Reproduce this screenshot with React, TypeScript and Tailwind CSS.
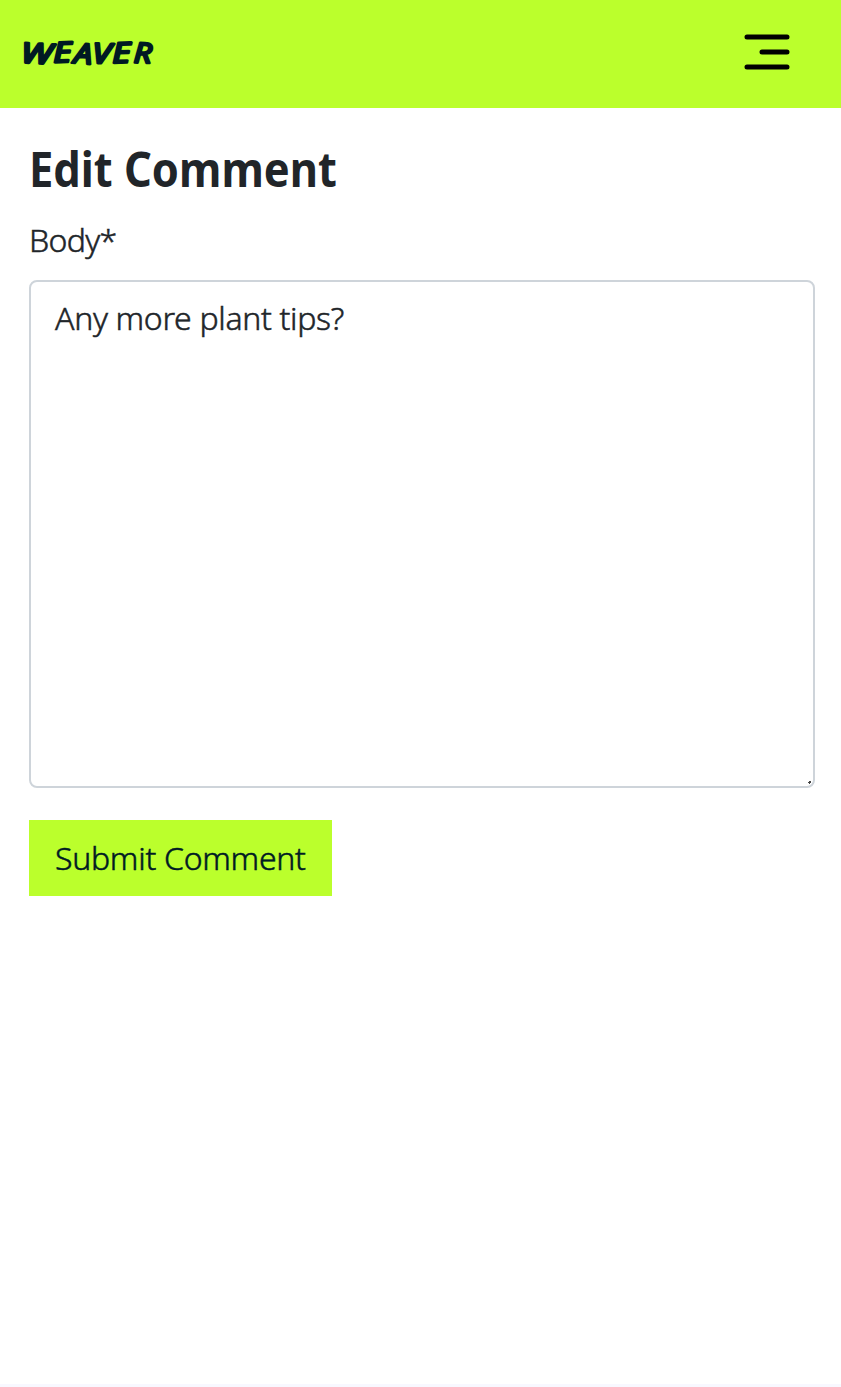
const letters = [
  { char: 'W', x: 20.5, y: 62.5, rotate: 3, stretch: 1.3 },
  { char: 'E', x: 53.5, y: 62.5, rotate: -2, stretch: 1.25 },
  { char: 'A', x: 73.5, y: 63, rotate: 4, stretch: 1.15 },
  { char: 'V', x: 92, y: 63, rotate: 2, stretch: 1.2 },
  { char: 'E', x: 112.5, y: 63, rotate: -2, stretch: 1.25 },
  { char: 'R', x: 133.5, y: 62.5, rotate: 2, stretch: 1.12 },
];

export default function App() {
  return (
    <div className="flex h-[1387px] w-full flex-col overflow-hidden bg-white font-['Noto_Sans',sans-serif] text-[#212529]">
      <header className="flex h-[108px] shrink-0 items-start justify-between bg-[#bbff2c] pr-[51px]">
        <a href="#" aria-label="Weaver">
          <svg width="170" height="108" viewBox="0 0 170 108" className="font-['Open_Sans',sans-serif] text-[28px] font-medium italic" fill="#001a23" stroke="#001a23" strokeWidth="2.5" strokeLinejoin="round">
            {letters.map((l) => (
              <text key={l.x} transform={`translate(${l.x} ${l.y}) rotate(${l.rotate}) scale(${l.stretch} 1)`}>
                {l.char}
              </text>
            ))}
          </svg>
        </a>
        <button type="button" aria-label="Menu" className="mt-[34px]">
          <svg width="46" height="36" viewBox="0 0 46 36" fill="none" stroke="#000" strokeWidth="5" strokeLinecap="round">
            <path d="M3 3H43M18 18H43M3 33H43" />
          </svg>
        </button>
      </header>
      <main className="flex flex-1 flex-col items-start pl-[29px] pr-[26px]">
        <h1 className="mt-[36px] origin-left scale-x-[0.887] text-[49px] leading-[48px] font-bold whitespace-nowrap">Edit Comment</h1>
        <label htmlFor="body" className="mt-[24px] text-[32px] leading-[48px] font-light tracking-[-0.7px] whitespace-nowrap [-webkit-text-stroke:0.5px_#212529]">Body*</label>
        <div className="relative mt-[16px] w-full">
          <textarea
            id="body"
            defaultValue="Any more plant tips?"
            spellCheck={false}
            className="block h-[508px] w-full resize-none rounded-[8px] border-2 border-[#ced4da] bg-white px-[24px] py-[12px] text-[32px] leading-[48px] font-light tracking-[-0.32px] outline-none [-webkit-text-stroke:0.5px_#212529]"
          />
          <svg className="absolute right-[3px] bottom-[3px]" width="4" height="4" viewBox="0 0 4 4" fill="#444">
            <path d="M0 1h1V0h2v2H2v1H1V2H0z" />
          </svg>
        </div>
        <button type="button" className="mt-[32px] h-[76px] w-[303px] bg-[#bbff2c] pl-[26px] text-left text-[32px] leading-[48px] font-light tracking-[-0.28px] whitespace-nowrap text-[#001a23] [-webkit-text-stroke:0.5px_#001a23]">
          Submit Comment
        </button>
      </main>
      <footer className="h-[3px] shrink-0 bg-[#f8f8ff]" />
    </div>
  );
}
